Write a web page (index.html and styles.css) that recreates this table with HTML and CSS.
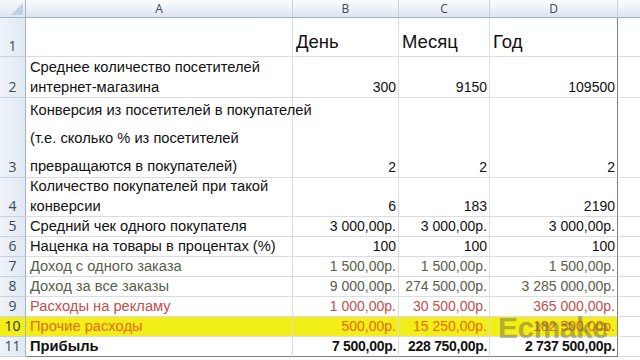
FILE: index.html
```html
<!DOCTYPE html>
<html lang="ru">
<head>
<meta charset="utf-8">
<title>Расчёт прибыли</title>
<link rel="stylesheet" href="styles.css">
</head>
<body>
<div class="sheet">
  <div class="corner"><span class="tri"></span></div>
  <div class="colhead">A</div>
  <div class="colhead">B</div>
  <div class="colhead">C</div>
  <div class="colhead">D</div>
  <div class="colhead last"></div>

  <div class="rowhead">1</div>
  <div class="cell"></div>
  <div class="cell big">День</div>
  <div class="cell big">Месяц</div>
  <div class="cell big edge">Год</div>
  <div class="cell out"></div>

  <div class="rowhead">2</div>
  <div class="cell text">Среднее количество посетителей<br>интернет-магазина</div>
  <div class="cell num">300</div>
  <div class="cell num">9150</div>
  <div class="cell num edge">109500</div>
  <div class="cell out"></div>

  <div class="rowhead">3</div>
  <div class="cell text spread"><span>Конверсия из посетителей в покупателей</span><span>(т.е. сколько % из посетителей</span><span>превращаются в покупателей)</span></div>
  <div class="cell num">2</div>
  <div class="cell num">2</div>
  <div class="cell num edge">2</div>
  <div class="cell out"></div>

  <div class="rowhead">4</div>
  <div class="cell text">Количество покупателей при такой<br>конверсии</div>
  <div class="cell num">6</div>
  <div class="cell num">183</div>
  <div class="cell num edge">2190</div>
  <div class="cell out"></div>

  <div class="rowhead">5</div>
  <div class="cell text">Средний чек одного покупателя</div>
  <div class="cell num">3 000,00р.</div>
  <div class="cell num">3 000,00р.</div>
  <div class="cell num edge">3 000,00р.</div>
  <div class="cell out"></div>

  <div class="rowhead">6</div>
  <div class="cell text">Наценка на товары в процентах (%)</div>
  <div class="cell num">100</div>
  <div class="cell num">100</div>
  <div class="cell num edge">100</div>
  <div class="cell out"></div>

  <div class="rowhead">7</div>
  <div class="cell text olive">Доход с одного заказа</div>
  <div class="cell num olive">1 500,00р.</div>
  <div class="cell num olive">1 500,00р.</div>
  <div class="cell num olive edge">1 500,00р.</div>
  <div class="cell out"></div>

  <div class="rowhead">8</div>
  <div class="cell text olive">Доход за все заказы</div>
  <div class="cell num olive">9 000,00р.</div>
  <div class="cell num olive">274 500,00р.</div>
  <div class="cell num olive edge">3 285 000,00р.</div>
  <div class="cell out"></div>

  <div class="rowhead">9</div>
  <div class="cell text red">Расходы на рекламу</div>
  <div class="cell num red">1 000,00р.</div>
  <div class="cell num red">30 500,00р.</div>
  <div class="cell num red edge">365 000,00р.</div>
  <div class="cell out"></div>

  <div class="rowhead hl">10</div>
  <div class="cell text orange hl">Прочие расходы</div>
  <div class="cell num orange hl">500,00р.</div>
  <div class="cell num orange hl">15 250,00р.</div>
  <div class="cell num orange hl edge">182 500,00р.</div>
  <div class="cell out"></div>

  <div class="rowhead">11</div>
  <div class="cell text bold bottom">Прибыль</div>
  <div class="cell num bold bottom">7 500,00р.</div>
  <div class="cell num bold bottom">228 750,00р.</div>
  <div class="cell num bold bottom edge">2 737 500,00р.</div>
  <div class="cell out"></div>

  <div class="watermark">Ecmake</div>
</div>
</body>
</html>
```

FILE: styles.css
```css
html, body {
  margin: 0;
  padding: 0;
  background: #ffffff;
}

body {
  width: 640px;
  height: 360px;
  overflow: hidden;
  font-family: "Liberation Sans", "Noto Sans", sans-serif;
}

.sheet {
  position: relative;
  display: grid;
  grid-template-columns: 26px 267px 106px 91px 128px 22px;
  grid-template-rows: 18px 39px 41px 80px 39px repeat(7, 20px) 3px;
  width: 640px;
  height: 360px;
}

.corner {
  position: relative;
  background: linear-gradient(#f6f9fc, #dfe6f0);
  border-right: 1px solid #9eb6ce;
  border-bottom: 1px solid #9eb6ce;
}

.tri {
  position: absolute;
  right: 2px;
  bottom: 2px;
  width: 0;
  height: 0;
  border-left: 12px solid transparent;
  border-bottom: 12px solid #c2cfdf;
}

.colhead {
  background: linear-gradient(#f9fbfd 0%, #eef2f8 50%, #dde5ef 100%);
  border-right: 1px solid #c5d2e2;
  border-bottom: 1px solid #9eb6ce;
  color: #3a4a5a;
  font-size: 12px;
  display: flex;
  align-items: center;
  justify-content: center;
  font-family: "Open Sans", "Noto Sans", sans-serif;
}

.colhead.last {
  border-right: none;
}

.rowhead {
  background: linear-gradient(90deg, #eef3f9, #e2e9f2);
  border-right: 1px solid #9eb6ce;
  border-bottom: 1px solid #c5d2e2;
  color: #3a4a5a;
  font-size: 14px;
  display: flex;
  align-items: flex-end;
  justify-content: center;
  padding-bottom: 1px;
  font-family: "Open Sans", "Noto Sans", sans-serif;
}

.rowhead.hl {
  background: #f4ee18;
  color: #333;
}

.cell {
  border-right: 1px solid #dadcdd;
  border-bottom: 1px solid #dadcdd;
  font-size: 14.7px;
  line-height: 20px;
  color: #111;
  display: flex;
  align-items: flex-end;
  white-space: nowrap;
}

.cell.text {
  padding-left: 4px;
  flex-direction: column;
  align-items: flex-start;
  justify-content: flex-end;
}

.cell.spread {
  justify-content: space-between;
  padding-top: 1px;
  line-height: 22px;
}

.cell.num {
  justify-content: flex-end;
  padding-right: 2px;
  font-size: 14px;
}

.cell.num.bold {
  letter-spacing: -0.3px;
}

.cell.big {
  font-size: 18.5px;
  padding-left: 3px;
  padding-bottom: 4px;
}

.cell.edge {
  border-right: 1px solid #7f7f7f;
}

.cell.bottom {
  border-bottom: 1px solid #7f7f7f;
}

.cell.out {
  border-right: none;
}

.olive {
  color: #56604a;
}

.red {
  color: #c0504d;
}

.orange {
  color: #e46c0a;
}

.hl {
  background: #f4ee18;
}

.bold {
  font-weight: bold;
}

.watermark {
  position: absolute;
  left: 498px;
  top: 312px;
  font-family: "Liberation Sans", sans-serif;
  font-weight: bold;
  font-size: 30px;
  line-height: 32px;
  color: rgba(95, 95, 70, 0.45);
  letter-spacing: -0.5px;
  pointer-events: none;
}
```
